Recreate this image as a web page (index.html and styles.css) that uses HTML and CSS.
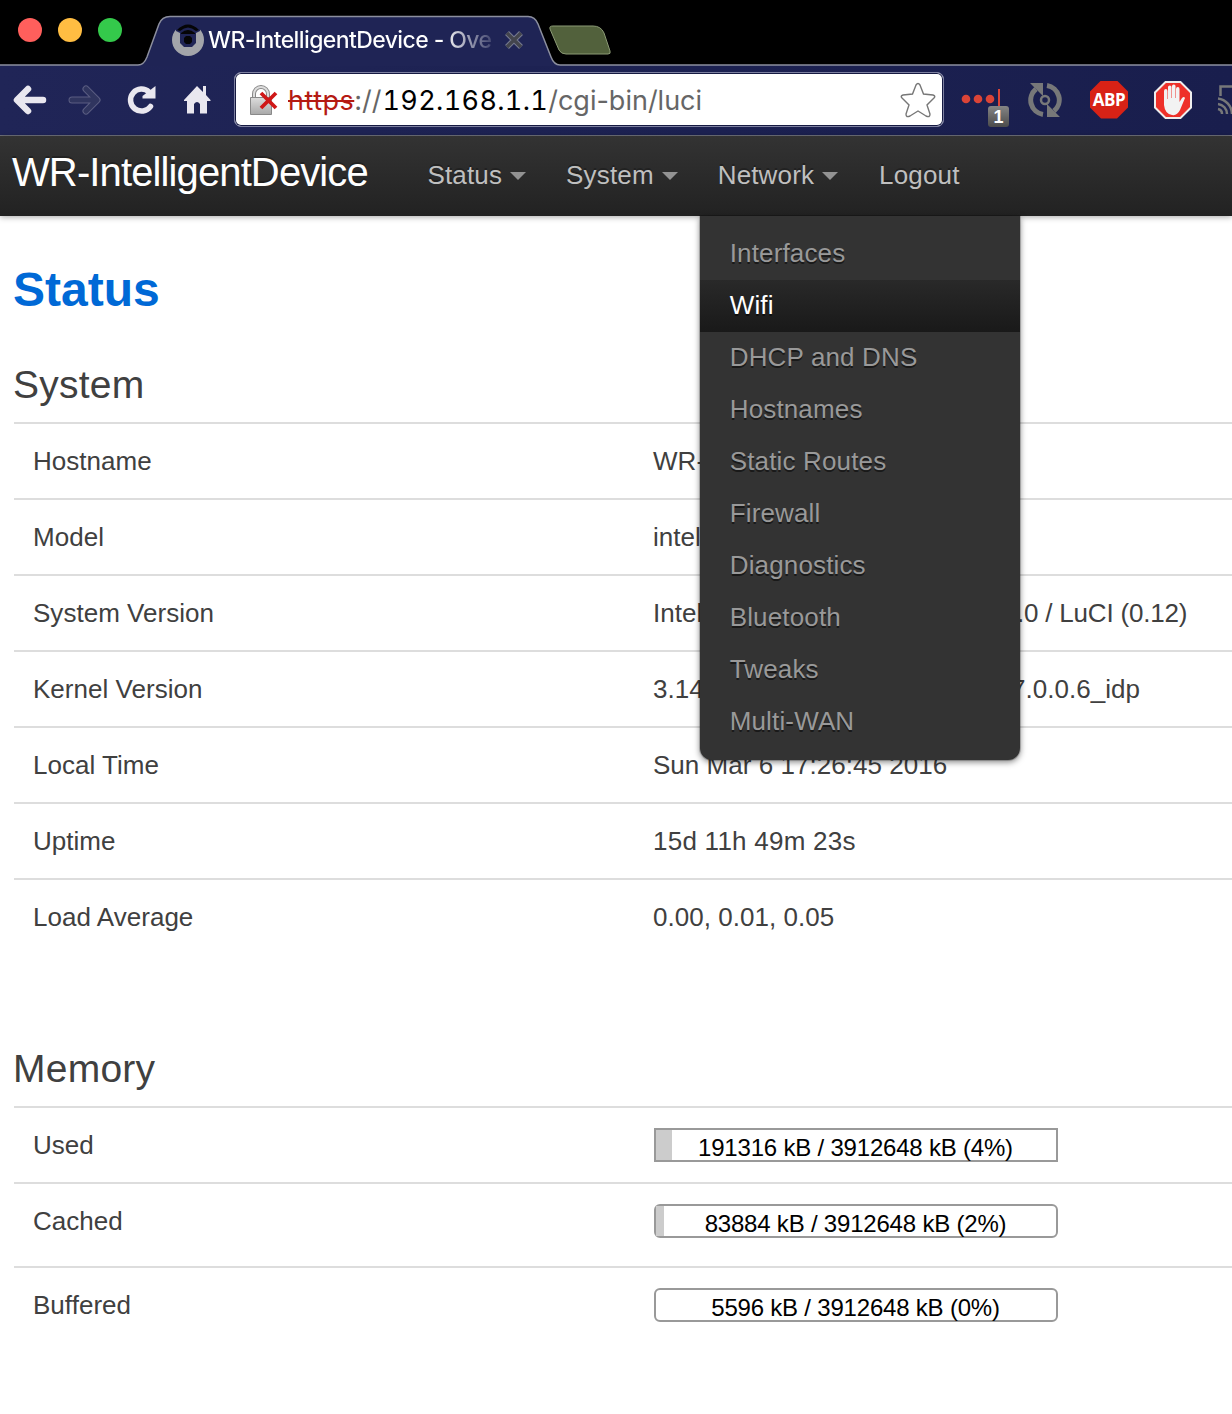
FILE: index.html
```html
<!DOCTYPE html>
<html lang="en">
<head>
<meta charset="utf-8">
<title>WR-IntelligentDevice - Overview</title>
<link rel="stylesheet" href="styles.css">
</head>
<body>
<div class="window">
  <header class="tabstrip">
    <svg class="tab-shape" width="1232" height="68" viewBox="0 0 1232 68"><path d="M-2 65H138C143 65 145 62 147 57L159 24Q162 16.500 170 16.500H528Q535 16.500 538 24L551 57Q554 65 560 65H1234V70H-2Z" fill="#1f2455" stroke="#8c8f9e" stroke-width="1.500"/><path d="M553 26H593Q601 26 604 33L610 51Q611 54 608 54H566Q561 54 559 50L550 29Q549 26 553 26Z" fill="#52613c" stroke="#8b9a75"/></svg>
    <div class="lights"><i class="light red"></i><i class="light amber"></i><i class="light green"></i></div>
    <div class="tab">
      <svg width="32" height="32" viewBox="0 0 32 32"><circle cx="16" cy="16" r="11.500" fill="none" stroke="#a3a5aa" stroke-width="9"/><path d="M4 0H28V7L24 9V19L20 23H12L8 19V9L4 7Z" fill="#1f2455"/><path d="M5 6Q16-5 27 6L24 7Q16 0 8 7ZM9 9Q16 3 23 9V10H9Z" fill="#050507"/><path d="M14 12h4l2 2v4l-2 2h-4l-2-2v-4z" fill="#050507"/></svg>
      <span class="tab-title">WR-IntelligentDevice - Ove</span>
      <svg width="18" height="18" viewBox="0 0 18 18"><path d="M2 2L16 16M16 2L2 16" stroke="#777b91" stroke-width="5.500"/><path d="M2 2L16 16M16 2L2 16" stroke="#43454d" stroke-width="3.500"/></svg>
    </div>
  </header>
  <div class="toolbar">
    <svg width="34" height="32" viewBox="0 0 34 32"><path d="M30 16H5M15 5L4 16L15 27" fill="none" stroke="#e9e7ef" stroke-width="6.500" stroke-linejoin="round" stroke-linecap="round"/></svg>
    <svg width="34" height="32" viewBox="0 0 34 32"><path d="M5 16H29M19 5L30 16L19 27" fill="none" stroke="#5a5d82" stroke-width="7" stroke-linejoin="round" stroke-linecap="round"/><path d="M5 16H29M19 5L30 16L19 27" fill="none" stroke="#30355f" stroke-width="5" stroke-linejoin="round" stroke-linecap="round"/></svg>
    <svg width="32" height="32" viewBox="0 0 32 32"><path d="M24.500 22.500A11 11 0 1 1 23 8" fill="none" stroke="#e9e7ef" stroke-width="5.500" stroke-linecap="round"/><path d="M29.500 2V14.500H16.500V12Z" fill="#e9e7ef"/></svg>
    <svg width="28" height="32" viewBox="0 0 28 32"><path d="M13 2L19 8V2H22V11L26.500 16V17H23V29.500H16V20Q13 16 10 20V29.500H3V17H0V16Z" fill="#e9e7ef"/></svg>
    <div class="address">
      <svg width="30" height="32" viewBox="0 0 30 32"><defs><linearGradient id="metal" x2="0" y2="1"><stop stop-color="#ddd"/><stop offset="1" stop-color="#a8a8a8"/></linearGradient></defs><path d="M5 14V10A7 7 0 0 1 19 10V14" fill="none" stroke="#888" stroke-width="4"/><path d="M5 14V10A7 7 0 0 1 19 10V14" fill="none" stroke="#ddd" stroke-width="2"/><path d="M1.500 13.500H22.500V30.500H1.500Z" fill="url(#metal)" stroke="#898989"/><path d="M12 9L27 24M27 9L12 24" stroke="#cf1717" stroke-width="3.800"/></svg>
      <span class="url"><s>https</s>://<b>192.168.1.1</b>/cgi-bin/luci</span>
      <svg width="36" height="36" viewBox="0 0 36 36"><path d="M16 3Q18 0 20 3L23.500 12L33 13Q36 14 34 16L27 23L30 32Q30 36 26 34L18 29L10 34Q6 36 6 32L9 23L2 16Q0 14 3 13L12.500 12Z" fill="#fff" stroke="#777" stroke-width="1.400"/></svg>
    </div>
    <div class="dots"><svg width="48" height="44" viewBox="0 0 48 44"><g fill="#db4437"><circle cx="5" cy="19" r="4.300"/><circle cx="17" cy="19" r="4.300"/><circle cx="29" cy="19" r="4.300"/><path d="M37 9h2v17h-2z"/></g></svg><span class="badge">1</span></div>
    <svg width="36" height="36" viewBox="0 0 36 36"><g fill="none" stroke="#777879" stroke-width="5"><path d="M15 32.500A14.500 14.500 0 0 1 8 7M19 3.500A14.500 14.500 0 0 1 26 29"/><circle cx="17" cy="18" r="4" stroke-width="2.500"/></g><path d="M2 1H15V14ZM19 22V35H32Z" fill="#777879"/></svg>
    <div class="abp"><span>ABP</span></div>
    <svg width="38" height="38" viewBox="0 0 38 38"><path d="M11.500 1H26.500L37 11.500V26.500L26.500 37H11.500L1 26.500V11.500Z" fill="#ee3029" stroke="#eee" stroke-width="2"/><path d="M10 24V10Q10 8 11.800 8T13.500 10V18H14V6Q14 4.500 15.800 4.500T17.500 6V17H18V5Q18 3.500 19.800 3.500T21.500 5V17H22V8Q22 6 23.800 6T25.500 8V21L28 17Q30 15 31 17L26 29Q23 35 18 34Q11 33 10 24Z" fill="#f2f2f2"/></svg>
    <svg width="15" height="32" viewBox="0 0 15 32"><g fill="none" stroke="#777879" stroke-width="2.500"><path d="M3.500 12V2.500H15M1 14.500A16 16 0 0 1 15 30M1 20A10 10 0 0 1 10 30M1 25A5 5 0 0 1 5 30"/></g></svg>
  </div>

  <nav class="navbar">
    <a class="brand">WR-IntelligentDevice</a>
    <a class="nav-item">Status<i class="caret"></i></a>
    <a class="nav-item">System<i class="caret"></i></a>
    <div class="dropdown">
      <a class="nav-item">Network<i class="caret"></i></a>
      <ul class="menu">
        <li>Interfaces</li><li class="active">Wifi</li><li>DHCP and DNS</li><li>Hostnames</li><li>Static Routes</li><li>Firewall</li><li>Diagnostics</li><li>Bluetooth</li><li>Tweaks</li><li>Multi-WAN</li>
      </ul>
    </div>
    <a class="nav-item">Logout</a>
  </nav>

  <main class="content">
    <h1>Status</h1>
    <h2>System</h2>
    <dl class="table">
      <div class="row"><dt>Hostname</dt><dd>WR-</dd></div>
      <div class="row"><dt>Model</dt><dd>intel</dd></div>
      <div class="row"><dt>System Version</dt><dd><span class="lead version">Intel</span><span class="tail">.0 / LuCI (0.12)</span></dd></div>
      <div class="row"><dt>Kernel Version</dt><dd><span class="lead kernel">3.14</span>7.0.0.6_idp</dd></div>
      <div class="row"><dt>Local Time</dt><dd>Sun Mar 6 17:26:45 2016</dd></div>
      <div class="row"><dt>Uptime</dt><dd class="uptime">15d 11h 49m 23s</dd></div>
      <div class="row"><dt>Load Average</dt><dd>0.00, 0.01, 0.05</dd></div>
    </dl>
    <h2 class="memory">Memory</h2>
    <dl class="table">
      <div class="row"><dt>Used</dt><dd><div class="meter square"><i class="fill" style="width:4%"></i><span>191316 kB / 3912648 kB (4%)</span></div></dd></div>
      <div class="row tall"><dt>Cached</dt><dd><div class="meter"><i class="fill" style="width:2%"></i><span>83884 kB / 3912648 kB (2%)</span></div></dd></div>
      <div class="row"><dt>Buffered</dt><dd><div class="meter"><i class="fill" style="width:0%"></i><span>5596 kB / 3912648 kB (0%)</span></div></dd></div>
    </dl>
  </main>
</div>
</body>
</html>
```
FILE: styles.css
```css
* { box-sizing: border-box; }
body { margin: 0; background: #fff; color: #404040; font: 26px/36px "Liberation Sans", Arial, sans-serif; }
.window { width: 1232px; height: 1414px; overflow: hidden; }
svg { display: block; flex: none; }

/* Browser chrome */
.tabstrip { position: relative; height: 66px; background: #000; display: flex; padding-left: 18px; }
.tab-shape { position: absolute; left: 0; top: 0; }
.lights { display: flex; gap: 16px; padding-top: 18px; width: 154px; }
.light { width: 24px; height: 24px; border-radius: 50%; }
.red { background: #ff5f5c; }
.amber { background: #ffbd42; }
.green { background: #34c94b; }
.tab { position: relative; display: flex; align-items: center; height: 32px; margin-top: 24px; }
.tab-title { width: 289px; margin-left: 4px; margin-right: 8px; white-space: nowrap; font: 500 23px/32px Inter, sans-serif; letter-spacing: -.6px; color: transparent; background: linear-gradient(90deg, #fff 235px, #3a3e69 286px); background-clip: text; -webkit-background-clip: text; }
.toolbar { position: relative; height: 70px; padding: 0 0 2px 13px; display: grid; grid-template-columns: 54px 59px 58px 50px 709px 18px 67px 62px 64px 63px 15px; align-items: center; background: linear-gradient(90deg, #202557, #191e4d); border-bottom: 1px solid #70727c; }
.address { width: 710px; height: 55px; background: #fff; border: 1px solid #7d80a0; box-shadow: inset 0 0 0 1px #161a42; border-radius: 7px; display: flex; align-items: center; padding: 0 7px 0 14px; }
.url { flex: 1; margin-left: 9px; padding-top: 2px; font: 27px/36px Inter, sans-serif; letter-spacing: 0; color: #666; white-space: nowrap; }
.url s { color: #b51a12; text-decoration-thickness: 2px; letter-spacing: .5px; }
.url b { color: #000; font-weight: 400; font-variant-numeric: tabular-nums; letter-spacing: .35px; margin-left: 1px; }
.dots { position: relative; grid-column: 7; padding-top: 4px; }
.badge { position: absolute; left: 27px; top: 30px; width: 21px; height: 21px; border-radius: 3px; background: linear-gradient(#858585, #4b4b4b); color: #fff; font: bold 18px/22px "Liberation Sans", sans-serif; text-align: center; }
.abp { width: 38px; height: 38px; background: #d82216; clip-path: polygon(29% 0, 71% 0, 100% 29%, 100% 71%, 71% 100%, 29% 100%, 0 71%, 0 29%); color: #fff; font: bold 17px/38px "Open Sans", sans-serif; display: flex; justify-content: center; letter-spacing: -.5px; }

/* Router navigation */
.navbar { position: relative; z-index: 2; height: 80px; display: flex; padding-left: 12px; background: linear-gradient(#333, #222); box-shadow: 0 1px 6px rgba(0,0,0,.35); }
.brand { width: 395.5px; color: #fff; font-size: 40px; line-height: 72px; letter-spacing: -.88px; text-shadow: 0 -2px 0 rgba(0,0,0,.25); }
.nav-item { display: flex; align-items: center; height: 78px; padding: 0 20px; color: #bfbfbf; letter-spacing: .15px; text-shadow: 0 -2px 0 rgba(0,0,0,.25); }
.nav-item:last-child { padding-left: 21px; }
.caret { width: 0; height: 0; margin: 2px 0 0 8px; border: 8px solid transparent; border-top-color: #929292; border-bottom: 0; }
.dropdown { position: relative; }
.menu { position: absolute; left: 2px; top: 80px; width: 320px; margin: 0; padding: 12px 0; list-style: none; background: #333; color: #999; letter-spacing: .15px; border-radius: 0 0 12px 12px; box-shadow: 0 2px 6px rgba(0,0,0,.5), 0 0 0 1px rgba(0,0,0,.18); text-shadow: 0 2px 0 rgba(0,0,0,.5); }
.menu li { height: 52px; padding-left: 30px; line-height: 50px; }
.menu .active { color: #fff; background: linear-gradient(#292929, #191919); }

/* Status page */
.content { padding: 38px 0 0 13px; }
h1 { margin: 0; font-size: 48px; line-height: 72px; color: #0069d6; }
h2 { margin: 22px 0 0; font-size: 39px; line-height: 74px; font-weight: 400; letter-spacing: .25px; }
.memory { margin-top: 78px; }
.table { margin: 0 0 0 1px; }
.row { display: grid; grid-template-columns: 620px 1fr; height: 76px; padding: 19px 0 0 19px; border-top: 2px solid #ddd; white-space: nowrap; letter-spacing: .03px; }
.tall { height: 84px; }
dt, dd { margin: 0; }
.lead { display: inline-block; }
.version { width: 364px; }
.kernel { width: 358px; }
.tail { letter-spacing: -.2px; }
.uptime { letter-spacing: .25px; }
.meter { position: relative; width: 404px; height: 34px; margin: 1px 0 0 1px; border: 2px solid #999; border-radius: 6px; color: #000; font-size: 24px; line-height: 36px; text-align: center; letter-spacing: -.2px; }
.square { border-radius: 0; }
.fill { position: absolute; left: 0; top: 0; height: 30px; background: #ccc; }
.meter span { position: relative; left: -.5px; }
```
